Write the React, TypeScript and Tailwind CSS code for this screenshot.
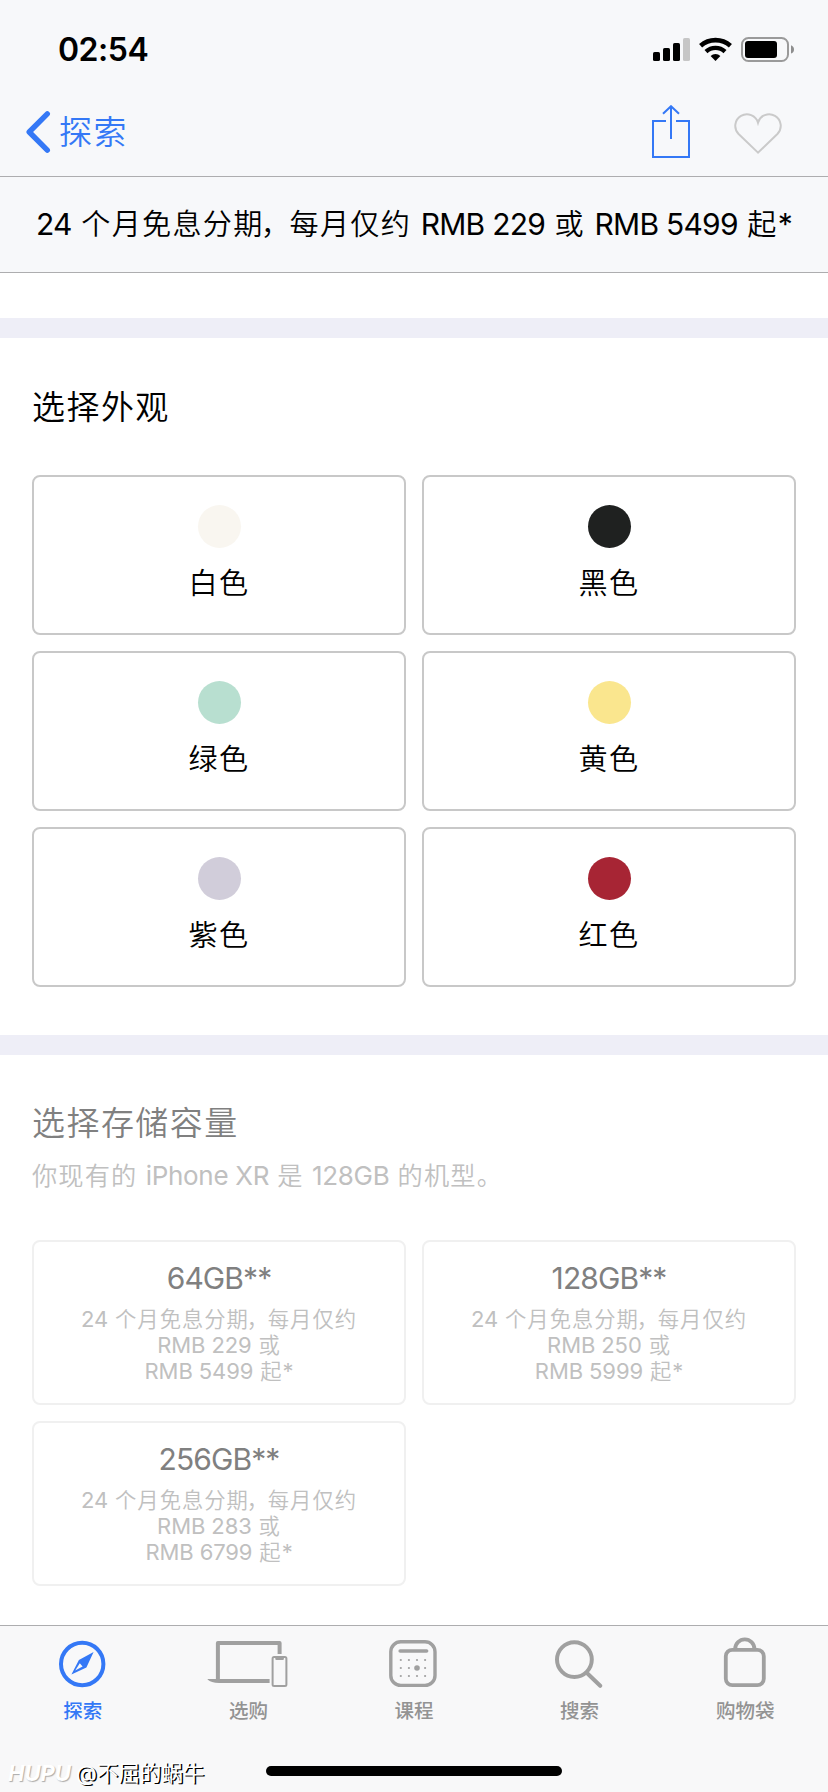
import type { ReactNode } from "react";
import clsx from "clsx";

interface Finish {
  label: string;
  swatch: string;
}

interface Capacity {
  label: string;
  monthly: string;
  total: string;
}

interface Tab {
  label: string;
  icon: ReactNode;
  active?: boolean;
}

const finishes: Finish[] = [
  { label: "白色", swatch: "bg-[#f9f6f0]" },
  { label: "黑色", swatch: "bg-[#1f2120]" },
  { label: "绿色", swatch: "bg-[#b8dfd0]" },
  { label: "黄色", swatch: "bg-[#fae68e]" },
  { label: "紫色", swatch: "bg-[#d1cdda]" },
  { label: "红色", swatch: "bg-[#a72534]" },
];

const capacities: Capacity[] = [
  { label: "64GB**", monthly: "229", total: "5499" },
  { label: "128GB**", monthly: "250", total: "5999" },
  { label: "256GB**", monthly: "283", total: "6799" },
];

// Chinese runs are set slightly smaller and looser than the Latin around them
const Han = ({ children }: { children: ReactNode }) => (
  <span className="text-[0.97em] font-[350] tracking-[0.045em]">{children}</span>
);

const Comma = () => <span className="-ml-[0.1em] tracking-[-0.01em]">，</span>;

const CompassIcon = () => (
  <svg className="w-[82px] h-[52px]" viewBox="0 0 82 52" fill="none">
    <circle cx="40.2" cy="28" r="21.2" stroke="currentColor" strokeWidth="4" />
    <path
      fill="currentColor"
      fillRule="evenodd"
      d="M51.6 15.9 44.4 31.4 29.4 38.4 36.9 24Z M37.8 27.2 33.2 34.6 40.6 30.6Z"
    />
  </svg>
);

const DevicesIcon = () => (
  <svg className="w-[82px] h-[52px]" viewBox="0 0 82 52" fill="none">
    <path
      stroke="currentColor"
      strokeWidth="4"
      strokeLinejoin="round"
      d="M10.9 44V7H72.6V18"
    />
    <path fill="currentColor" d="M.6 43H62.6V47H12Q4 47 .6 43.6Z" />
    <rect
      x="65.6"
      y="21"
      width="13.8"
      height="29"
      rx="1.5"
      stroke="currentColor"
      strokeWidth="2"
    />
    <path fill="currentColor" d="M68.3 21H76.9V23Q76.9 24 75.9 24H69.3Q68.3 24 68.3 23Z" />
  </svg>
);

const SessionsIcon = () => (
  <svg className="w-[82px] h-[52px]" viewBox="0 0 82 52" fill="none">
    <rect
      x="17.8"
      y="5.8"
      width="44.2"
      height="43.6"
      rx="10"
      stroke="currentColor"
      strokeWidth="3.4"
    />
    <path stroke="currentColor" strokeWidth="3.6" strokeLinecap="round" d="M27.2 15H53.6" />
    {[24, 32, 40].map((y) =>
      [27.8, 35.9, 44, 52.1].map((x) => (
        <circle key={`${x}-${y}`} cx={x} cy={y} r="1.1" fill="currentColor" />
      ))
    )}
    <circle cx="44" cy="32" r="2.8" fill="currentColor" />
  </svg>
);

const SearchIcon = () => (
  <svg
    className="w-[82px] h-[52px]"
    viewBox="0 0 82 52"
    fill="none"
    stroke="currentColor"
    strokeWidth="4"
    strokeLinecap="round"
  >
    <circle cx="35.4" cy="23.6" r="17.4" />
    <path d="M48.2 37.2 61.2 49.8" />
  </svg>
);

const BagIcon = () => (
  <svg
    className="w-[82px] h-[52px]"
    viewBox="0 0 82 52"
    fill="none"
    stroke="currentColor"
    strokeWidth="3.8"
  >
    <rect x="21.8" y="13.8" width="38" height="35.4" rx="6.5" />
    <path d="M31.2 13.4V13A9.6 9.6 0 0 1 50.4 13V13.4" />
  </svg>
);

const tabs: Tab[] = [
  { label: "探索", icon: <CompassIcon />, active: true },
  { label: "选购", icon: <DevicesIcon /> },
  { label: "课程", icon: <SessionsIcon /> },
  { label: "搜索", icon: <SearchIcon /> },
  { label: "购物袋", icon: <BagIcon /> },
];

const StatusBar = () => (
  <div className="flex items-start justify-between h-[88px] pt-[34px] pl-[58px] pr-[33px]">
    <span className="text-[32px] leading-[32px] font-semibold tracking-[-0.5px]">
      02:54
    </span>
    <svg className="w-[143px] h-7" viewBox="0 0 143 28" fill="none">
      <rect x="1" y="18" width="7" height="9" rx="1.6" fill="#000" />
      <rect x="11" y="14" width="7" height="13" rx="1.6" fill="#000" />
      <rect x="21" y="9" width="7" height="18" rx="1.6" fill="#000" />
      <rect x="31" y="4" width="7" height="23" rx="1.6" fill="#c6c6c6" />
      <path stroke="#000" strokeWidth="4.6" d="M48.6 11.8A22.5 22.5 0 0 1 78.4 11.8" />
      <path stroke="#000" strokeWidth="4.4" d="M54 17.6A14 14 0 0 1 73 17.6" />
      <path fill="#000" d="M63.5 27 58.6 22.1A7 7 0 0 1 68.4 22.1Z" />
      <rect x="90" y="4" width="46" height="23" rx="6.5" stroke="#9a9a9a" strokeWidth="2" />
      <rect x="93" y="7" width="32" height="17" rx="3" fill="#000" />
      <path fill="#8e8e8e" d="M139 11.2Q142 12.4 142 15.4T139 19.6Z" />
    </svg>
  </div>
);

const NavBar = () => (
  <div className="flex items-center justify-between h-[88px] pl-[25px] pr-[46px]">
    <div className="flex items-center text-[#3478f6]">
      <svg className="w-[26px] h-[44px]" viewBox="0 0 26 44" fill="none">
        <path
          stroke="currentColor"
          strokeWidth="5.4"
          strokeLinecap="round"
          strokeLinejoin="round"
          d="M22.3 3.8 4.2 22 22.3 40.2"
        />
      </svg>
      <span className="ml-2 text-[34px] leading-[44px]">
        <Han>探索</Han>
      </span>
    </div>
    <div className="flex items-center gap-11">
      <svg
        className="w-[40px] h-[54px]"
        viewBox="0 0 40 54"
        fill="none"
        stroke="#3478f6"
        strokeWidth="2"
      >
        <path d="M16 16H3V52H39V16H26" />
        <path d="M21 34V1.8M13 8.8 21 1.2 29 8.8" />
      </svg>
      <svg className="w-[48px] h-[42px] mt-1" viewBox="0 0 48 42" fill="none">
        <path
          stroke="#cacaca"
          strokeWidth="2"
          d="M24 39.6 4.6 21A11.6 11.6 0 1 1 24 9.6A11.6 11.6 0 1 1 43.4 21Z"
        />
      </svg>
    </div>
  </div>
);

const Divider = () => <div className="w-full h-5 shrink-0 bg-[#eeeef7]" />;

const App = () => {
  return (
    <div className="relative flex flex-col w-[828px] h-[1792px] overflow-hidden bg-white text-black font-['Inter','Noto_Sans_CJK_SC',sans-serif]">
      <header className="shrink-0 bg-[#f7f8fa]">
        <StatusBar />
        <NavBar />
        <div className="h-[97px] border-y border-[#adadaf] text-center text-[30px] leading-[95px] tracking-[-0.75px] whitespace-nowrap">
          24
          <Han>
            {" 个月免息分期"}
            <Comma />
            {"每月仅约 "}
          </Han>
          RMB 229<Han>{" 或 "}</Han>RMB 5499<Han>{" 起"}</Han>*
        </div>
      </header>

      <main className="flex flex-col flex-1 pt-[45px]">
        <Divider />
        <section className="px-8 pt-[47px] pb-12">
          <h2 className="text-[34px] leading-[44px]">
            <Han>选择外观</Han>
          </h2>
          <div className="grid grid-cols-2 gap-4 mt-[46px]">
            {finishes.map((finish) => (
              <div
                key={finish.label}
                className="flex flex-col items-center h-[160px] pt-7 border-2 border-[#c8c8c8] rounded-lg"
              >
                <div className={clsx("w-[43px] h-[43px] rounded-full", finish.swatch)} />
                <span className="mt-4 text-[30px] leading-[38px]">
                  <Han>{finish.label}</Han>
                </span>
              </div>
            ))}
          </div>
        </section>

        <Divider />
        <section className="px-8 pt-[46px]">
          <h2 className="text-[34px] leading-[44px] text-[#808080]">
            <Han>选择存储容量</Han>
          </h2>
          <p className="mt-[15px] text-[26px] leading-[32px] tracking-[-0.3px] text-[#c0c0c0]">
            <Han>{"你现有的 "}</Han>iPhone XR<Han>{" 是 "}</Han>128GB
            <Han>{" 的机型。"}</Han>
          </p>
          <div className="grid grid-cols-2 gap-4 mt-[48px]">
            {capacities.map((capacity) => (
              <div
                key={capacity.label}
                className="h-[165px] pt-[17px] text-center border-2 border-[#f0f0f0] rounded-lg"
              >
                <div className="text-[30px] leading-[38px] tracking-[-0.9px] text-[#808080]">
                  {capacity.label}
                </div>
                <div className="mt-[9px] text-[22px] leading-[26px] tracking-[-0.1px] text-[#c0c0c0]">
                  24
                  <Han>
                    {" 个月免息分期"}
                    <Comma />
                    每月仅约
                  </Han>
                  <br />
                  RMB {capacity.monthly}
                  <Han>{" 或"}</Han>
                  <br />
                  RMB {capacity.total}
                  <Han>{" 起"}</Han>*
                </div>
              </div>
            ))}
          </div>
        </section>
      </main>

      <footer className="h-[167px] shrink-0 border-t border-[#adadaf] bg-[#f8f8f9]">
        <nav className="grid grid-cols-5 pt-[10px]">
          {tabs.map((tab) => (
            <div
              key={tab.label}
              className={clsx(
                "flex flex-col items-center",
                tab.active ? "text-[#3478f6]" : "text-[#a0a0a0]"
              )}
            >
              {tab.icon}
              <span
                className={clsx(
                  "mt-[10px] text-[19.5px] leading-[26px] font-medium",
                  !tab.active && "text-[#939393]"
                )}
              >
                {tab.label}
              </span>
            </div>
          ))}
        </nav>
        <div className="w-[296px] h-[10px] mx-auto mt-[42px] bg-black rounded-full" />
      </footer>

      <div className="absolute left-[8px] bottom-[5px] flex items-center leading-[28px]">
        <span className="w-[68px] text-[22px] font-bold italic text-white [text-shadow:1px_1px_1px_#aaa]">
          HUPU
        </span>
        <span className="text-[21.5px] text-white whitespace-nowrap [text-shadow:1.5px_1px_0_#000]">
          @不屈的蜗牛
        </span>
      </div>
    </div>
  );
};

export default App;
